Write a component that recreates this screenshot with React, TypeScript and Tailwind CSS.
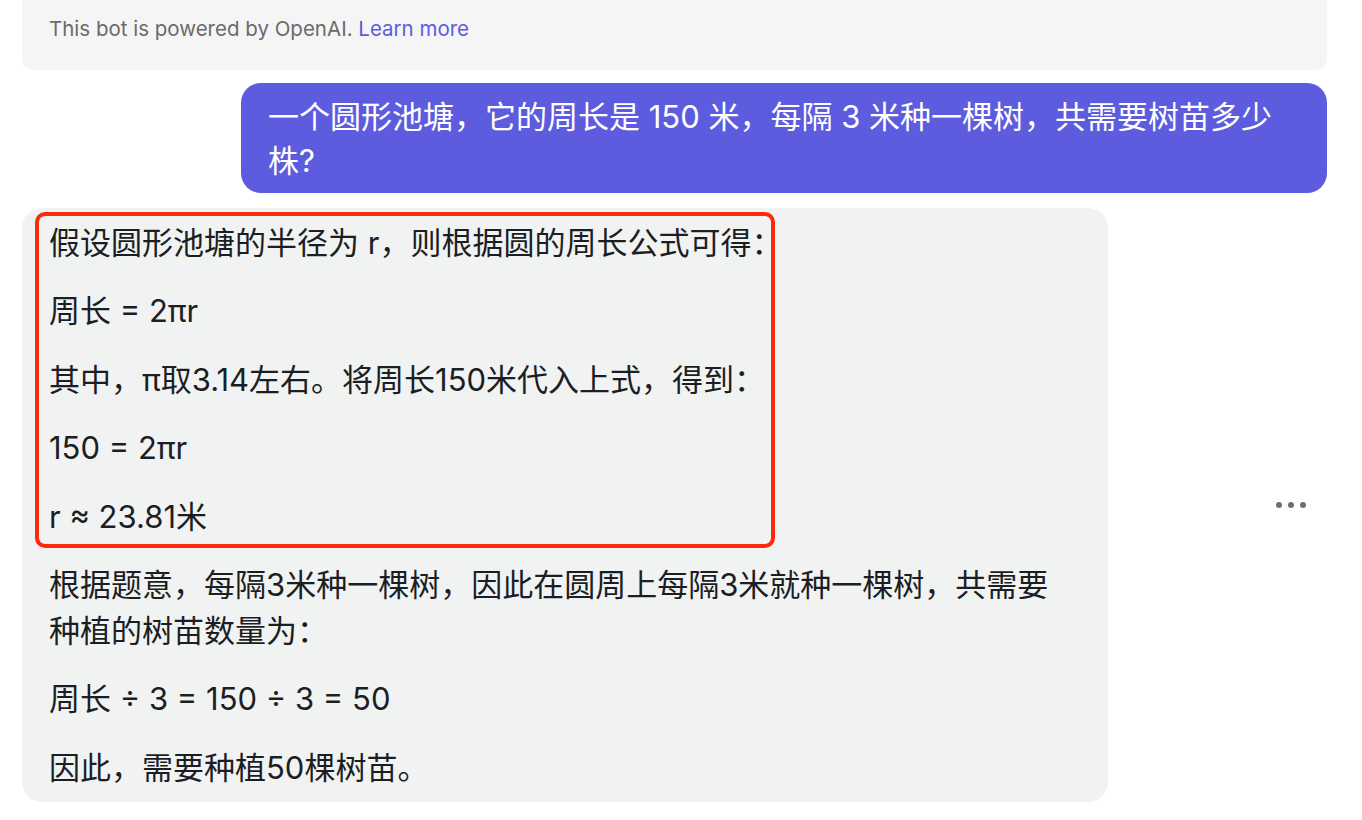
import React from "react";

const paragraphs = [
  "假设圆形池塘的半径为 r，则根据圆的周长公式可得：",
  "周长 = 2πr",
  "其中，π取3.14左右。将周长150米代入上式，得到：",
  "150 = 2πr",
  "r ≈ 23.81米",
  "根据题意，每隔3米种一棵树，因此在圆周上每隔3米就种一棵树，共需要种植的树苗数量为：",
  "周长 ÷ 3 = 150 ÷ 3 = 50",
  "因此，需要种植50棵树苗。",
];

const App = () => {
  return (
    <div
      className="w-[1362px] h-[820px] overflow-hidden bg-white pl-[22px] pr-[35px]"
      style={{ fontFamily: "Inter, 'Noto Sans CJK SC', sans-serif" }}
    >
      <div className="h-[70px] rounded-b-[12px] bg-[#f5f5f5] px-[27px] pt-[16px]">
        <p className="text-[20.5px] leading-[26px] text-[#6b6b6b]">
          This bot is powered by OpenAI.{" "}
          <span className="text-[#5d5cde]">Learn more</span>
        </p>
      </div>

      <div className="mt-[13px] flex justify-end">
        <div className="w-[1086px] rounded-[20px] bg-[#5d5cde] px-[27px] pt-[12px] pb-[10px] text-[31px] leading-[44px] text-white">
          一个圆形池塘，它的周长是 150 米，每隔 3 米种一棵树，共需要树苗多少株?
        </div>
      </div>

      <div className="mt-[15px] flex items-center justify-between">
        <div className="relative w-[1086px] rounded-[20px] bg-[#f1f2f2] pl-[27px] pr-[32px] pt-[12px] pb-[11px] text-[31px] leading-[46px] text-[#1b1e22]">
          {paragraphs.map((p, i) => (
            <p key={i} className={i < paragraphs.length - 1 ? "mb-[22.4px]" : ""}>
              {p}
            </p>
          ))}
          <div className="pointer-events-none absolute left-[13px] top-[4px] h-[336px] w-[740px] rounded-[10px] border-[4px] border-[#ff2a0a]" />
        </div>
        <div className="mr-[21px] flex gap-[6px]">
          <span className="h-[6px] w-[6px] rounded-full bg-[#6e6e6e]" />
          <span className="h-[6px] w-[6px] rounded-full bg-[#6e6e6e]" />
          <span className="h-[6px] w-[6px] rounded-full bg-[#6e6e6e]" />
        </div>
      </div>
    </div>
  );
};

export default App;
